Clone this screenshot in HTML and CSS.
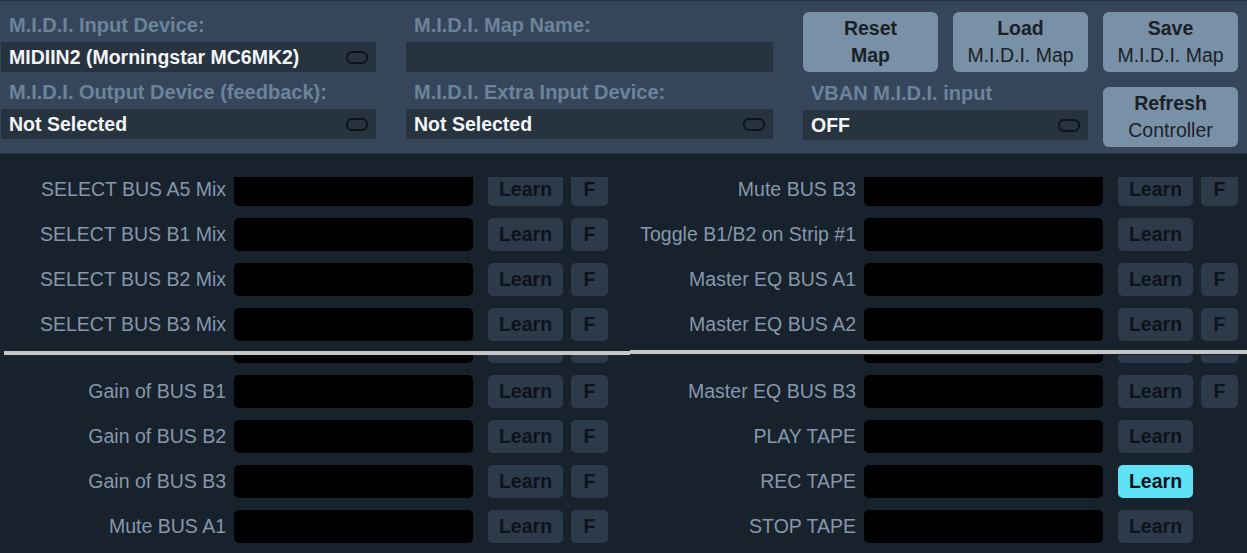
FILE: index.html
```html
<!DOCTYPE html>
<html>
<head>
    <meta charset="utf-8" />
    <title>M.I.D.I. Mapping</title>
    <link rel="stylesheet" href="styles.css">
</head>
<body>
    <div class="header">
        <div class="column col1">
            <div class="field">
                <div class="fieldLabel">M.I.D.I. Input Device:</div>
                <div class="select"><span>MIDIIN2 (Morningstar MC6MK2)</span><i class="knob"></i></div>
            </div>
            <div class="field">
                <div class="fieldLabel">M.I.D.I. Output Device (feedback):</div>
                <div class="select"><span>Not Selected</span><i class="knob"></i></div>
            </div>
        </div>
        <div class="column col2">
            <div class="field">
                <div class="fieldLabel">M.I.D.I. Map Name:</div>
                <div class="select"></div>
            </div>
            <div class="field">
                <div class="fieldLabel">M.I.D.I. Extra Input Device:</div>
                <div class="select"><span>Not Selected</span><i class="knob"></i></div>
            </div>
        </div>
        <div class="column col3">
            <div class="buttonRow">
                <div class="bigButton"><b>Reset</b><b>Map</b></div>
                <div class="bigButton"><b>Load</b><span>M.I.D.I. Map</span></div>
                <div class="bigButton"><b>Save</b><span>M.I.D.I. Map</span></div>
            </div>
            <div class="buttonRow second">
                <div class="field vban">
                    <div class="fieldLabel">VBAN M.I.D.I. input</div>
                    <div class="select"><span>OFF</span><i class="knob"></i></div>
                </div>
                <div class="bigButton refresh"><b>Refresh</b><span>Controller</span></div>
            </div>
        </div>
    </div>

    <div class="mapList">
        <div class="pane paneTop">
            <div class="rows">
                <div class="row">
                    <div class="mapping"><span class="name">SELECT BUS A5 Mix</span><span class="code"></span><button class="learn">Learn</button><button class="fb">F</button></div>
                    <div class="mapping"><span class="name">Mute BUS B3</span><span class="code"></span><button class="learn">Learn</button><button class="fb">F</button></div>
                </div>
                <div class="row">
                    <div class="mapping"><span class="name">SELECT BUS B1 Mix</span><span class="code"></span><button class="learn">Learn</button><button class="fb">F</button></div>
                    <div class="mapping"><span class="name">Toggle B1/B2 on Strip #1</span><span class="code"></span><button class="learn">Learn</button></div>
                </div>
                <div class="row">
                    <div class="mapping"><span class="name">SELECT BUS B2 Mix</span><span class="code"></span><button class="learn">Learn</button><button class="fb">F</button></div>
                    <div class="mapping"><span class="name">Master EQ BUS A1</span><span class="code"></span><button class="learn">Learn</button><button class="fb">F</button></div>
                </div>
                <div class="row">
                    <div class="mapping"><span class="name">SELECT BUS B3 Mix</span><span class="code"></span><button class="learn">Learn</button><button class="fb">F</button></div>
                    <div class="mapping"><span class="name">Master EQ BUS A2</span><span class="code"></span><button class="learn">Learn</button><button class="fb">F</button></div>
                </div>
            </div>
        </div>

        <div class="divider"><div class="left"></div><div class="right"></div></div>

        <div class="pane">
            <div class="rows">
                <div class="row peek">
                    <div class="mapping"><span class="name"></span><span class="code"></span><button class="learn"></button><button class="fb"></button></div>
                    <div class="mapping"><span class="name"></span><span class="code"></span><button class="learn"></button><button class="fb"></button></div>
                </div>
                <div class="row">
                    <div class="mapping"><span class="name">Gain of BUS B1</span><span class="code"></span><button class="learn">Learn</button><button class="fb">F</button></div>
                    <div class="mapping"><span class="name">Master EQ BUS B3</span><span class="code"></span><button class="learn">Learn</button><button class="fb">F</button></div>
                </div>
                <div class="row">
                    <div class="mapping"><span class="name">Gain of BUS B2</span><span class="code"></span><button class="learn">Learn</button><button class="fb">F</button></div>
                    <div class="mapping"><span class="name">PLAY TAPE</span><span class="code"></span><button class="learn">Learn</button></div>
                </div>
                <div class="row">
                    <div class="mapping"><span class="name">Gain of BUS B3</span><span class="code"></span><button class="learn">Learn</button><button class="fb">F</button></div>
                    <div class="mapping"><span class="name">REC TAPE</span><span class="code"></span><button class="learn active">Learn</button></div>
                </div>
                <div class="row">
                    <div class="mapping"><span class="name">Mute BUS A1</span><span class="code"></span><button class="learn">Learn</button><button class="fb">F</button></div>
                    <div class="mapping"><span class="name">STOP TAPE</span><span class="code"></span><button class="learn">Learn</button></div>
                </div>
            </div>
        </div>
    </div>
</body>
</html>
```

FILE: styles.css
```css
body {
    margin: 0;
    background-color: #17222c;
    font-family: "Liberation Sans", Arial, sans-serif;
    overflow: hidden;
}

.header {
    box-sizing: border-box;
    height: 154px;
    background-color: #36465a;
    border-top: 1px solid #243141;
    border-bottom: 1px solid #2a3747;
    padding: 11px 0 0 1px;
    display: flex;
    gap: 30px;
}

.col1 {
    width: 375px;
}

.col2 {
    width: 367px;
}

.col3 {
    width: 435px;
}

.field {
    margin-bottom: 8px;
}

.fieldLabel {
    font-size: 20px;
    font-weight: bold;
    color: #6b849c;
    line-height: 24px;
    margin: 1px 0 5px;
    padding-left: 8px;
    white-space: nowrap;
}

.select {
    box-sizing: border-box;
    height: 30px;
    background-color: #27333f;
    display: flex;
    align-items: center;
    justify-content: space-between;
    padding: 0 8px;
    color: #f3f5f7;
    font-size: 19.5px;
    font-weight: bold;
    white-space: nowrap;
}

.knob {
    width: 18px;
    height: 9px;
    border: 2px solid #0e1318;
    border-radius: 6px;
}

.buttonRow {
    display: flex;
    gap: 15px;
}

.second {
    margin-top: 8px;
}

.vban {
    width: 285px;
    margin-bottom: 0;
}

.bigButton {
    width: 135px;
    height: 60px;
    background-color: #7891a7;
    border-radius: 6px;
    display: flex;
    flex-direction: column;
    justify-content: center;
    align-items: center;
    font-size: 19.5px;
    line-height: 27px;
    color: #1b2026;
}

.refresh {
    margin-top: 7px;
}

.mapList {
    padding-top: 23px;
}

.pane {
    overflow: hidden;
}

.paneTop {
    height: 173px;
}

.paneTop .rows {
    margin-top: -4px;
}

.rows {
    display: flex;
    flex-direction: column;
    gap: 12px;
}

.row {
    display: flex;
    height: 33px;
}

.mapping {
    width: 630px;
    flex-shrink: 0;
    display: flex;
    align-items: center;
}

.name {
    width: 226px;
    margin-right: 8px;
    text-align: right;
    color: #8797ac;
    font-size: 19.5px;
    white-space: nowrap;
}

.code {
    width: 239px;
    height: 33px;
    background-color: #000;
    border-radius: 5px;
}

.learn, .fb {
    height: 33px;
    border: none;
    padding: 0;
    background-color: #2c3a49;
    border-radius: 5px;
    color: #0c131b;
    font-family: "Liberation Sans", Arial, sans-serif;
    font-size: 19.5px;
    font-weight: bold;
}

.learn {
    width: 75px;
    margin-left: 15px;
}

.fb {
    width: 37px;
    margin-left: 8px;
}

.active {
    background-color: #5fe2f6;
}

.peek {
    height: 8px;
}

.peek .code, .peek .learn, .peek .fb {
    height: 8px;
    border-radius: 0 0 5px 5px;
}

.divider {
    display: flex;
    height: 5px;
}

.divider .left {
    width: 626px;
    height: 4px;
    margin-left: 4px;
    align-self: flex-end;
    background-color: #c5c7c8;
}

.divider .right {
    flex: 1;
    height: 4px;
    background-color: #c5c7c8;
}
```
